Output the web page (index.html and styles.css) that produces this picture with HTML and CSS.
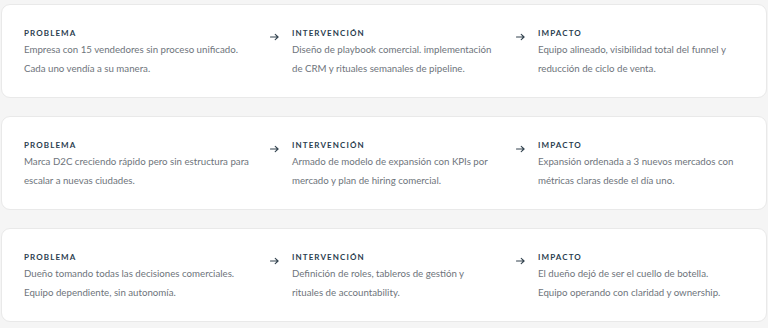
FILE: index.html
```html
<!DOCTYPE html>
<html lang="es">
<head>
<meta charset="utf-8">
<link rel="stylesheet" href="styles.css">
</head>
<body>
<div class="list">
  <div class="case">
    <div class="col">
      <div class="body">
        <div class="label">PROBLEMA</div>
        <p class="text">Empresa con 15 vendedores sin proceso unificado. Cada uno vendía a su manera.</p>
      </div>
    </div>
    <div class="col">
      <svg class="arrow" viewBox="0 0 10 8"><path d="M0.5 4H9M5.8 1L9 4 5.8 7" fill="none" stroke="currentColor" stroke-width="1.2" stroke-linecap="round" stroke-linejoin="round"/></svg>
      <div class="body">
        <div class="label">INTERVENCIÓN</div>
        <p class="text">Diseño de playbook comercial. implementación de CRM y rituales semanales de pipeline.</p>
      </div>
    </div>
    <div class="col">
      <svg class="arrow" viewBox="0 0 10 8"><path d="M0.5 4H9M5.8 1L9 4 5.8 7" fill="none" stroke="currentColor" stroke-width="1.2" stroke-linecap="round" stroke-linejoin="round"/></svg>
      <div class="body">
        <div class="label">IMPACTO</div>
        <p class="text">Equipo alineado, visibilidad total del funnel y reducción de ciclo de venta.</p>
      </div>
    </div>
  </div>

  <div class="case">
    <div class="col">
      <div class="body">
        <div class="label">PROBLEMA</div>
        <p class="text">Marca D2C creciendo rápido pero sin estructura para escalar a nuevas ciudades.</p>
      </div>
    </div>
    <div class="col">
      <svg class="arrow" viewBox="0 0 10 8"><path d="M0.5 4H9M5.8 1L9 4 5.8 7" fill="none" stroke="currentColor" stroke-width="1.2" stroke-linecap="round" stroke-linejoin="round"/></svg>
      <div class="body">
        <div class="label">INTERVENCIÓN</div>
        <p class="text">Armado de modelo de expansión con KPIs por mercado y plan de hiring comercial.</p>
      </div>
    </div>
    <div class="col">
      <svg class="arrow" viewBox="0 0 10 8"><path d="M0.5 4H9M5.8 1L9 4 5.8 7" fill="none" stroke="currentColor" stroke-width="1.2" stroke-linecap="round" stroke-linejoin="round"/></svg>
      <div class="body">
        <div class="label">IMPACTO</div>
        <p class="text">Expansión ordenada a 3 nuevos mercados con métricas claras desde el día uno.</p>
      </div>
    </div>
  </div>

  <div class="case">
    <div class="col">
      <div class="body">
        <div class="label">PROBLEMA</div>
        <p class="text">Dueño tomando todas las decisiones comerciales. Equipo dependiente, sin autonomía.</p>
      </div>
    </div>
    <div class="col">
      <svg class="arrow" viewBox="0 0 10 8"><path d="M0.5 4H9M5.8 1L9 4 5.8 7" fill="none" stroke="currentColor" stroke-width="1.2" stroke-linecap="round" stroke-linejoin="round"/></svg>
      <div class="body">
        <div class="label">INTERVENCIÓN</div>
        <p class="text">Definición de roles, tableros de gestión y rituales de accountability.</p>
      </div>
    </div>
    <div class="col">
      <svg class="arrow" viewBox="0 0 10 8"><path d="M0.5 4H9M5.8 1L9 4 5.8 7" fill="none" stroke="currentColor" stroke-width="1.2" stroke-linecap="round" stroke-linejoin="round"/></svg>
      <div class="body">
        <div class="label">IMPACTO</div>
        <p class="text">El dueño dejó de ser el cuello de botella. Equipo operando con claridad y ownership.</p>
      </div>
    </div>
  </div>
</div>
</body>
</html>
```
FILE: styles.css
```css
html, body {
  margin: 0;
  padding: 0;
  background: #f5f5f5;
  font-family: Lato, "Noto Sans", sans-serif;
}
.list {
  padding: 4px 1px;
  display: flex;
  flex-direction: column;
  gap: 18px;
}
.case {
  background: #ffffff;
  border: 1px solid #e9e9e9;
  border-radius: 9px;
  padding: 22px 22px 19px;
  display: grid;
  grid-template-columns: repeat(3, 1fr);
  column-gap: 18px;
}
.col {
  display: flex;
  align-items: flex-start;
  gap: 13px;
  padding-right: 2px;
}
.col:first-child {
  padding-right: 0;
}
.col:last-child {
  padding-right: 10px;
}
.arrow {
  width: 9px;
  height: 8px;
  margin-top: 6px;
  color: #33434f;
  flex: none;
}
.body {
  min-width: 0;
}
.label {
  font-size: 8px;
  font-weight: 700;
  letter-spacing: 1.1px;
  color: #2a3d4f;
  line-height: 12px;
}
.text {
  margin: 1px 0 0;
  font-size: 9.7px;
  line-height: 19px;
  color: #6e747b;
}
```
